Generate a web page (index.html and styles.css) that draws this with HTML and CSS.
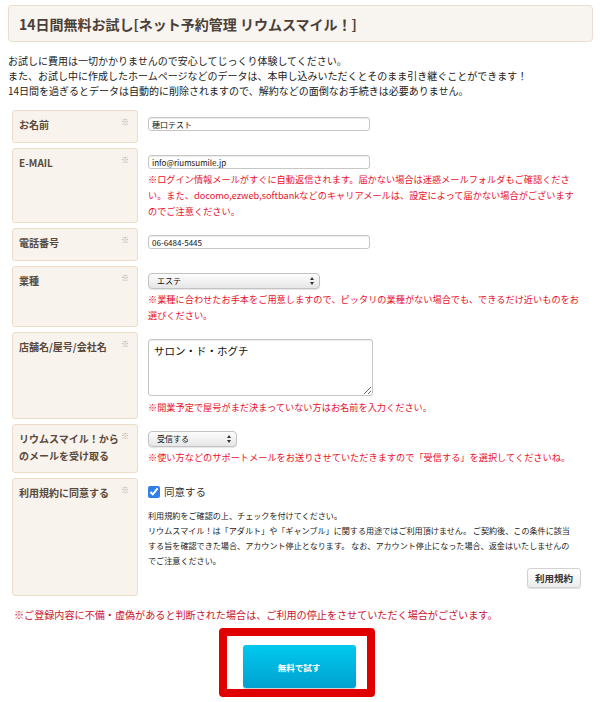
FILE: index.html
```html
<!DOCTYPE html>
<html lang="ja">
<head>
    <meta charset="UTF-8">
    <meta name="viewport" content="width=device-width, initial-scale=1.0">
    <title>14日間無料お試し</title>
    <link rel="stylesheet" href="styles.css">
</head>
<body>
    <div class="page-title">
        <h1>14日間無料お試し[ネット予約管理 リウムスマイル！]</h1>
    </div>

    <p class="intro">
        お試しに費用は一切かかりませんので安心してじっくり体験してください。<br>
        また、お試し中に作成したホームページなどのデータは、本申し込みいただくとそのまま引き継ぐことができます！<br>
        14日間を過ぎるとデータは自動的に削除されますので、解約などの面倒なお手続きは必要ありません。
    </p>

    <form id="trialForm" class="trial-form">
        <div class="row">
            <div class="label"><span>お名前</span><span class="req">※</span></div>
            <div class="field">
                <input type="text" class="text-input" value="穂口テスト">
            </div>
        </div>

        <div class="row">
            <div class="label"><span>E-MAIL</span><span class="req">※</span></div>
            <div class="field">
                <input type="text" class="text-input" value="info@riumsumile.jp">
                <p class="note">※ログイン情報メールがすぐに自動返信されます。届かない場合は迷惑メールフォルダもご確認くださ<br>い。また、docomo,ezweb,softbankなどのキャリアメールは、設定によって届かない場合がございます<br>のでご注意ください。</p>
            </div>
        </div>

        <div class="row">
            <div class="label"><span>電話番号</span><span class="req">※</span></div>
            <div class="field">
                <input type="text" class="text-input" value="06-6484-5445">
            </div>
        </div>

        <div class="row">
            <div class="label"><span>業種</span><span class="req">※</span></div>
            <div class="field">
                <span class="select-wrap select-wide">
                    <select class="select">
                        <option>エステ</option>
                    </select>
                </span>
                <p class="note">※業種に合わせたお手本をご用意しますので、ピッタリの業種がない場合でも、できるだけ近いものをお<br>選びください。</p>
            </div>
        </div>

        <div class="row">
            <div class="label"><span>店舗名/屋号/会社名</span><span class="req">※</span></div>
            <div class="field">
                <textarea class="textarea">サロン・ド・ホグチ</textarea>
                <p class="note">※開業予定で屋号がまだ決まっていない方はお名前を入力ください。</p>
            </div>
        </div>

        <div class="row">
            <div class="label"><span>リウムスマイル！から<br>のメールを受け取る</span><span class="req">※</span></div>
            <div class="field">
                <span class="select-wrap select-short">
                    <select class="select">
                        <option>受信する</option>
                        <option>受信しない</option>
                    </select>
                </span>
                <p class="note">※使い方などのサポートメールをお送りさせていただきますので「受信する」を選択してくださいね。</p>
            </div>
        </div>

        <div class="row">
            <div class="label"><span>利用規約に同意する</span><span class="req">※</span></div>
            <div class="field">
                <label class="agree"><input type="checkbox" checked> 同意する</label>
                <p class="terms">
                    利用規約をご確認の上、チェックを付けてください。<br>
                    リウムスマイル！は「アダルト」や「ギャンブル」に関する用途ではご利用頂けません。 ご契約後、この条件に該当<br>する旨を確認できた場合、アカウント停止となります。 なお、アカウント停止になった場合、返金はいたしませんの<br>でご注意ください。
                </p>
                <div class="terms-link">
                    <button type="button" class="small-btn">利用規約</button>
                </div>
            </div>
        </div>

        <p class="warning">※ご登録内容に不備・虚偽があると判断された場合は、ご利用の停止をさせていただく場合がございます。</p>

        <div class="submit-area">
            <div class="submit-frame">
                <button type="submit" class="submit-btn">無料で試す</button>
            </div>
        </div>
    </form>
</body>
</html>
```

FILE: styles.css
```css
/* Trial signup form */
body {
    font-family: "Noto Sans CJK JP", "Noto Sans", sans-serif;
    margin: 5px 7px 0 8px;
    color: #222;
    background-color: #fff;
}

.page-title {
    background-color: #f8f4ef;
    border: 1px solid #e9ddcf;
    border-radius: 4px;
    height: 35px;
    display: flex;
    align-items: center;
    padding-left: 10px;
}

h1 {
    margin: 0;
    font-size: 14px;
    line-height: 18px;
    color: #4a4038;
}

.intro {
    margin: 11px 0 0;
    font-size: 10px;
    line-height: 15px;
}

.trial-form {
    margin-top: 12px;
    padding: 0 12px 0 4px;
}

.row {
    display: flex;
    gap: 10px;
    margin-bottom: 5px;
}

.label {
    width: 126px;
    min-height: 33px;
    box-sizing: border-box;
    flex-shrink: 0;
    display: flex;
    justify-content: space-between;
    align-items: flex-start;
    padding: 5px 8px 8px 6px;
    background-color: #f8f3ed;
    border: 1px solid #eddcc7;
    border-radius: 3px;
    font-size: 10px;
    line-height: 17px;
    font-weight: bold;
    color: #5a4a3c;
}

.req {
    font-size: 8px;
    line-height: 12px;
    font-weight: normal;
    color: #aaa;
}

.field {
    flex: 1;
    padding: 7px 0 4px;
}

.text-input {
    display: block;
    box-sizing: border-box;
    width: 222px;
    height: 14px;
    margin: 0;
    padding: 0 3px;
    border: 1px solid #c6c6c6;
    border-radius: 3px;
    box-shadow: inset 0 1px 1px rgba(0, 0, 0, 0.08);
    font-family: inherit;
    font-size: 8px;
    color: #111;
}

.note {
    margin: 2px 0 0;
    font-size: 9.2px;
    line-height: 16px;
    color: #e8112d;
}

.select-wrap {
    display: block;
    position: relative;
}

.select-wide {
    width: 172px;
}

.select-short {
    width: 89px;
}

.select {
    display: block;
    width: 100%;
    height: 16px;
    margin: 0;
    padding: 0 0 0 8px;
    appearance: none;
    border: 1px solid #c2c2c2;
    border-radius: 4px;
    background: linear-gradient(#fdfdfd, #e6e6e6);
    box-shadow: 0 1px 1px rgba(0, 0, 0, 0.1);
    font-family: inherit;
    font-size: 8px;
    line-height: 14px;
    color: #111;
}

/* up/down arrows of the select */
.select-wrap::before,
.select-wrap::after {
    content: "";
    position: absolute;
    right: 6px;
    border-left: 2px solid transparent;
    border-right: 2px solid transparent;
    pointer-events: none;
}

.select-wrap::before {
    top: 4px;
    border-bottom: 3px solid #333;
}

.select-wrap::after {
    top: 9px;
    border-top: 3px solid #333;
}

.textarea {
    display: block;
    box-sizing: border-box;
    width: 225px;
    height: 57px;
    margin: 0;
    padding: 4px 5px;
    border: 1px solid #c6c6c6;
    border-radius: 3px;
    box-shadow: inset 0 1px 1px rgba(0, 0, 0, 0.08);
    font-family: inherit;
    font-size: 10.5px;
    line-height: 14px;
    color: #111;
}

.textarea + .note {
    margin-top: 3px;
}

.agree {
    display: flex;
    align-items: center;
    gap: 4px;
    height: 13px;
    font-size: 10.5px;
    color: #333;
}

.agree input {
    width: 12px;
    height: 12px;
    margin: 0;
    accent-color: #2f7fe6;
}

.terms {
    margin: 10px 0 0;
    font-size: 8.1px;
    line-height: 15px;
    color: #222;
}

.terms-link {
    display: flex;
    justify-content: flex-end;
    margin-bottom: 4px;
}

.small-btn {
    width: 54px;
    height: 20px;
    padding: 0;
    border: 1px solid #d2d2d2;
    border-radius: 3px;
    background: linear-gradient(#ffffff, #ececec);
    box-shadow: 0 1px 1px rgba(0, 0, 0, 0.12);
    font-family: inherit;
    font-size: 9.5px;
    font-weight: bold;
    color: #333;
}

.warning {
    margin: 11px 0 0 2px;
    font-size: 10.1px;
    line-height: 15px;
    color: #c8142f;
}

.submit-area {
    display: flex;
    justify-content: center;
    margin-top: 6px;
}

.submit-frame {
    border: 8px solid #e10000;
    border-radius: 4px;
    padding: 9px 11px 1px 16px;
}

.submit-btn {
    display: block;
    width: 113px;
    height: 43px;
    border: none;
    border-radius: 3px;
    background: linear-gradient(#00c9ee, #00a1cf);
    box-shadow: 0 1px 1px rgba(0, 0, 0, 0.2);
    font-family: inherit;
    font-size: 8.5px;
    font-weight: bold;
    color: #fff;
    cursor: pointer;
}
```
